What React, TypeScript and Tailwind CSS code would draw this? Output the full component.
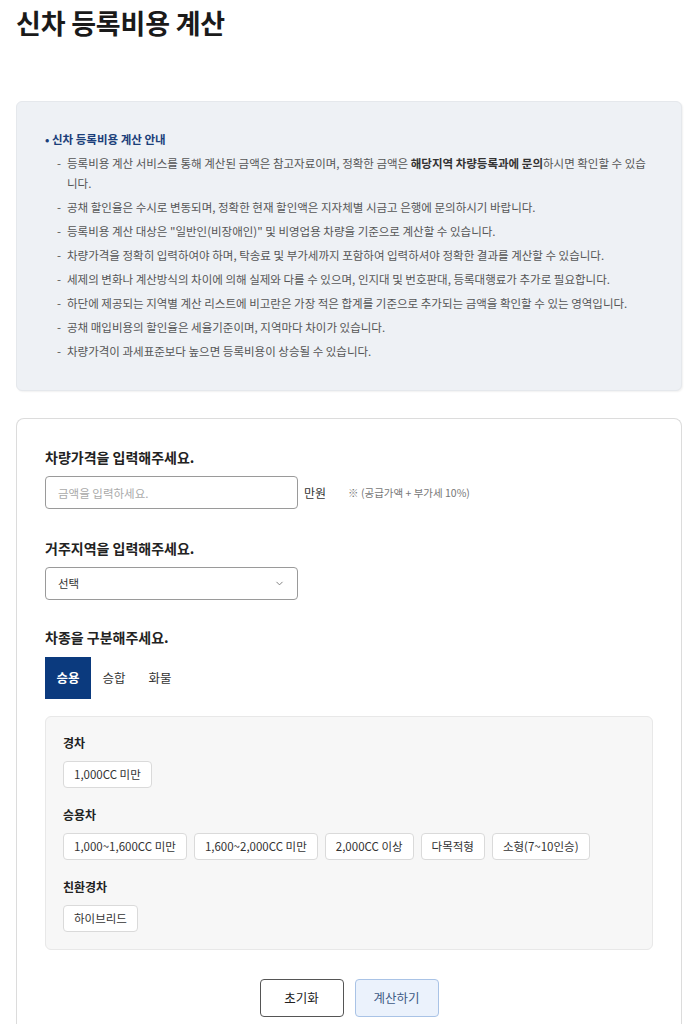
import { ChevronDown } from 'lucide-react'

const FONT = "font-['Noto_Sans_CJK_KR','Noto_Sans',sans-serif]"

const NOTICES: { text: React.ReactNode }[] = [
  {
    text: (
      <>
        등록비용 계산 서비스를 통해 계산된 금액은 참고자료이며, 정확한 금액은 <b className="font-bold text-[#333]">해당지역 차량등록과에 문의</b>하시면 확인할 수 있습니다.
      </>
    ),
  },
  { text: '공채 할인율은 수시로 변동되며, 정확한 현재 할인액은 지자체별 시금고 은행에 문의하시기 바랍니다.' },
  { text: '등록비용 계산 대상은 "일반인(비장애인)" 및 비영업용 차량을 기준으로 계산할 수 있습니다.' },
  { text: '차량가격을 정확히 입력하여야 하며, 탁송료 및 부가세까지 포함하여 입력하셔야 정확한 결과를 계산할 수 있습니다.' },
  { text: '세제의 변화나 계산방식의 차이에 의해 실제와 다를 수 있으며, 인지대 및 번호판대, 등록대행료가 추가로 필요합니다.' },
  { text: '하단에 제공되는 지역별 계산 리스트에 비고란은 가장 적은 합계를 기준으로 추가되는 금액을 확인할 수 있는 영역입니다.' },
  { text: '공채 매입비용의 할인율은 세율기준이며, 지역마다 차이가 있습니다.' },
  { text: '차량가격이 과세표준보다 높으면 등록비용이 상승될 수 있습니다.' },
]

const GROUPS = [
  { title: '경차', items: ['1,000CC 미만'] },
  { title: '승용차', items: ['1,000~1,600CC 미만', '1,600~2,000CC 미만', '2,000CC 이상', '다목적형', '소형(7~10인승)'] },
  { title: '친환경차', items: ['하이브리드'] },
]

const TABS = ['승용', '승합', '화물']

function Label({ children }: { children: React.ReactNode }) {
  return <h3 className="text-[14px] font-bold leading-[18px] text-[#222]">{children}</h3>
}

export default function App() {
  return (
    <div className={`${FONT} min-h-[1024px] bg-white text-[#333]`}>
      <div className="ml-4 w-[666px]">
        <h1 className="pt-[6px] text-[27px] font-bold leading-[34px] tracking-[-0.2px] text-[#1a1a1a]">신차 등록비용 계산</h1>

        <section className="mt-[61px] rounded-md border border-[#e5e8ec] bg-[#eef1f5] pb-[29px] pl-[28px] pr-[29px] pt-[29px] shadow-[1px_1px_2px_rgba(0,0,0,0.06)]">
          <p className="text-[11.5px] font-bold leading-[16px] text-[#1b3f7a]">• 신차 등록비용 계산 안내</p>
          <ul className="ml-[12px] mt-[6px] flex flex-col gap-[4px]">
            {NOTICES.map((notice, index) => (
              <li key={index} className="flex text-[11.5px] leading-[20px] text-[#555]">
                <span className="w-[10px] shrink-0">-</span>
                <span className="min-w-0">{notice.text}</span>
              </li>
            ))}
          </ul>
        </section>

        <section className="mt-[27px] rounded-t-lg border border-b-0 border-[#dcdcdc] px-[28px] pb-[8px] pt-[29px]">
          <Label>차량가격을 입력해주세요.</Label>
          <div className="mt-[10px] flex items-center">
            <input
              className="h-[33px] w-[253px] rounded border border-[#9a9a9a] px-[12px] text-[11.5px] text-[#333] outline-none placeholder:text-[#aaa]"
              placeholder="금액을 입력하세요."
            />
            <span className="ml-[6px] text-[12px] text-[#333]">만원</span>
            <span className="ml-[22px] text-[10.5px] text-[#777]">※ (공급가액 + 부가세 10%)</span>
          </div>

          <div className="mt-[30px]">
            <Label>거주지역을 입력해주세요.</Label>
          </div>
          <div className="mt-[10px] flex h-[33px] w-[253px] items-center justify-between rounded border border-[#9a9a9a] pl-[12px] pr-[12px]">
            <span className="text-[11.5px] text-[#333]">선택</span>
            <ChevronDown className="h-[11px] w-[11px] text-[#777]" strokeWidth={2} />
          </div>

          <div className="mt-[28px]">
            <Label>차종을 구분해주세요.</Label>
          </div>
          <div className="mt-[11px] flex">
            {TABS.map((tab, index) => (
              <div
                key={tab}
                className={`flex h-[42px] w-[46px] items-center justify-center text-[12.5px] ${
                  index === 0 ? 'bg-[#0b3a7e] font-bold text-white' : 'text-[#333]'
                }`}
              >
                {tab}
              </div>
            ))}
          </div>

          <div className="mt-[17px] flex flex-col gap-[19px] rounded-md border border-[#e8e8e8] bg-[#f7f7f7] px-[17px] pb-[17px] pt-[18px]">
            {GROUPS.map((group) => (
              <div key={group.title}>
                <h4 className="text-[12px] font-bold leading-[16px] text-[#222]">{group.title}</h4>
                <div className="mt-[10px] flex flex-wrap gap-[7px]">
                  {group.items.map((item) => (
                    <span
                      key={item}
                      className="flex h-[27px] items-center rounded border border-[#dadada] bg-white px-[10px] text-[11.5px] text-[#333]"
                    >
                      {item}
                    </span>
                  ))}
                </div>
              </div>
            ))}
          </div>

          <div className="mt-[29px] flex justify-center gap-[11px]">
            <button className="h-[38px] w-[84px] rounded border border-[#555] bg-white text-[12.5px] text-[#222]">초기화</button>
            <button className="h-[38px] w-[84px] rounded border border-[#a9c3e6] bg-[#ebf2fc] text-[12.5px] text-[#3d5a85]">계산하기</button>
          </div>
        </section>
      </div>
    </div>
  )
}
